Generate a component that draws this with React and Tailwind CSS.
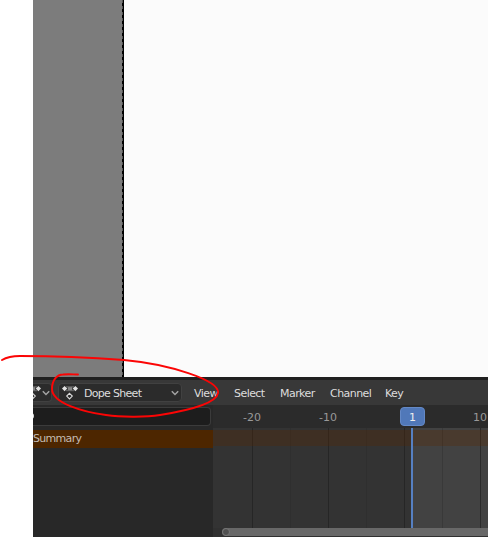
import React from "react";

function KeyIcon({ className }) {
  return (
    <svg className={className} width="16" height="14" viewBox="0 0 16 14">
      <rect x="5.800" y="1" width="4.400" height="3.600" fill="#858585" />
      <rect x="4" y="0.300" width="8" height="1" fill="#6c6c6c" />
      <rect x="4" y="4.200" width="8" height="1" fill="#6c6c6c" />
      <path d="M2.600 0 5.200 2.600 2.600 5.200 0 2.600z" fill="#e2e2e2" />
      <path d="M13.400 0 16 2.600 13.400 5.200 10.800 2.600z" fill="#e2e2e2" />
      <path d="M7.500 7.300 10.300 10.100 7.500 12.900 4.700 10.100z" fill="none" stroke="#dcdcdc" strokeWidth="1.100" />
    </svg>
  );
}

function Chevron({ className }) {
  return (
    <svg className={className} width="8" height="6" viewBox="0 0 8 6">
      <path d="M.8 1.200 4 4.500 7.200 1.200" fill="none" stroke="#a3a3a3" strokeWidth="1.500" />
    </svg>
  );
}

// [width of the cell, colour of the line on its right edge]
const cells = [
  ["w-[40px]", "border-[#262626]"],
  ["w-[38px]", "border-[#2f2f2f]"],
  ["w-[38px]", "border-[#262626]"],
  ["w-[38px]", "border-[#2f2f2f]"],
  ["w-[38px]", "border-[#262626]"],
];

function Header() {
  return (
    <div className="flex h-[25px] items-center bg-[#383838] text-[11px] text-[#dddddd]">
      <div className="flex h-[19px] w-[19px] shrink-0 items-center justify-end overflow-hidden rounded-r-[4px] border border-l-0 border-[#414141] bg-[#2b2b2b] pr-[1px]">
        <KeyIcon className="shrink-0" />
        <Chevron className="ml-[1px] shrink-0" />
      </div>
      <div className="ml-[6px] flex h-[19px] w-[124px] shrink-0 items-center rounded-[4px] border border-[#414141] bg-[#2b2b2b] pl-[3px] pr-[2px]">
        <KeyIcon />
        <span className="ml-[6px] flex-1 whitespace-nowrap pt-[3px] tracking-[-0.700px]">Dope Sheet</span>
        <Chevron />
      </div>
      <nav className="flex shrink-0 whitespace-nowrap pl-[12px] pt-[3px] tracking-[-0.550px]">
        <span className="w-[40px]">View</span>
        <span className="w-[46px]">Select</span>
        <span className="w-[50px]">Marker</span>
        <span className="w-[55px]">Channel</span>
        <span>Key</span>
      </nav>
    </div>
  );
}

function Channels() {
  return (
    <aside className="flex w-[180px] shrink-0 flex-col bg-[#282828]">
      <div className="flex h-[25px] pt-[2px]">
        <div className="flex h-[19px] w-[178px] items-center overflow-hidden rounded-r-[4px] border border-l-0 border-[#3b3b3b] bg-[#1d1d1d]">
          <div className="-ml-[5px] -mt-[2px] h-[6px] w-[6px] rounded-full bg-[#e5e5e5]" />
        </div>
      </div>
      <div className="flex h-[18px] items-center bg-[#4d2600] text-[11px] tracking-[-0.700px] text-[#c4bbb2]">
        Summary
      </div>
    </aside>
  );
}

function Timeline() {
  return (
    <section className="relative flex min-w-0 flex-1 flex-col overflow-hidden bg-[#333333]">
      <div className="flex h-[23px] shrink-0 items-center bg-[#2b2b2b] pt-[3px] text-center text-[11px] text-[#999999]">
        <span className="ml-px w-[76px] shrink-0">-20</span>
        <span className="w-[76px] shrink-0">-10</span>
        <span className="w-[76px] shrink-0" />
        <span className="w-[76px] shrink-0">10</span>
      </div>
      <div className="flex h-[100px] shrink-0">
        {cells.map(([w, line], i) => (
          <div key={i} className={`${w} shrink-0 border-r ${line}`} />
        ))}
        <div className="w-[6px] shrink-0" />
        <div className="w-[2px] shrink-0 bg-[#5680c2]" />
        <div className="w-[30px] shrink-0 border-r border-[#393939] bg-[#424242]" />
        <div className="w-[38px] shrink-0 border-r border-[#2b2b2b] bg-[#424242]" />
        <div className="flex-1 bg-[#424242]" />
      </div>
      <div className="h-[9px] shrink-0 bg-[#303030] pl-[9px]">
        <div className="flex h-[8px] items-center rounded-l-full bg-[#686868]">
          <div className="h-[8px] w-[8px] rounded-full border border-[#777777] bg-[#505050]" />
        </div>
      </div>
      <div className="absolute left-0 top-[25px] h-[16px] w-full bg-[#5a2800]/30" />
      <div className="absolute left-[198px] top-[23px] h-[100px] w-[2px] bg-[#5680c2]" />
      <div className="absolute left-[187px] top-[2px] flex h-[19px] w-[25px] items-center justify-center rounded-[4px] border border-[#6489c6] bg-[#5078b9] pt-[3px] text-[11px] text-[#eeeeee]">
        1
      </div>
    </section>
  );
}

export default function App() {
  return (
    <div className="relative flex h-[537px] w-[488px] overflow-hidden bg-white pl-[33px] font-['DejaVu_Sans',sans-serif]">
      <main className="flex min-w-0 flex-1 flex-col">
        <div className="flex h-[377px] shrink-0">
          <div className="w-[89px] bg-[#7c7c7c]" />
          <div className="w-[2px] bg-black">
            <div className="h-full w-px bg-[repeating-linear-gradient(to_bottom,#555_0px,#555_3px,#000_3px,#000_6px)]" />
          </div>
          <div className="flex-1 bg-[#fbfbfb]" />
        </div>
        <div className="h-[3px] shrink-0 bg-[#202020]" />
        <Header />
        <div className="flex h-[132px] shrink-0">
          <Channels />
          <Timeline />
        </div>
      </main>
      <svg className="pointer-events-none absolute left-0 top-0" width="488" height="537" viewBox="0 0 488 537">
        <path
          d="M2 360C7 357 12 356 20 356C50 356 91 357.500 124 360C168 364 220 380 218 393C216 404 185 411 160 415C145 417.500 120 417 106 415C83 412 52 403 52 389C52 380 57 374.500 63 374.500C69 374 73 374.500 78 374.500"
          fill="none"
          stroke="#fb0505"
          strokeWidth="1.900"
          strokeLinecap="round"
        />
      </svg>
    </div>
  );
}
